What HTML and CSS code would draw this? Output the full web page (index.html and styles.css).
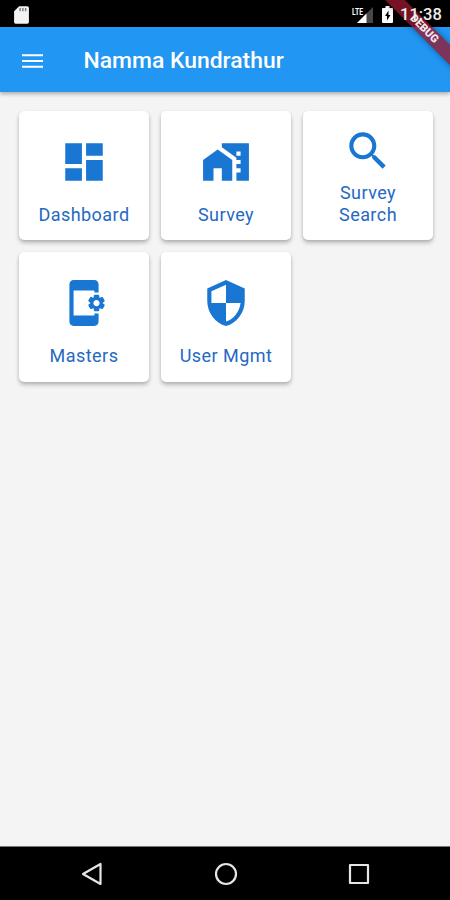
FILE: index.html
```html
<!DOCTYPE html>
<html lang="en">
<head>
<meta charset="utf-8">
<title>Namma Kundrathur</title>
<link rel="stylesheet" href="styles.css">
</head>
<body>
<div class="screen">
  <div class="status">
    <svg class="sd" viewBox="0 0 14 17"><path fill="#f4f4f4" d="M4.800 .3H12.500a1.500 1.500 0 0 1 1.500 1.500v13.400a1.500 1.500 0 0 1-1.500 1.500H1.500a1.500 1.500 0 0 1-1.500-1.500V5z"/><path stroke="#777" stroke-width="1.300" d="M5.700 2v3M8.300 2v3M10.900 2v3"/></svg>
    <div class="indicators">
      <svg class="signal" viewBox="0 0 22 18"><path fill="#484848" d="M21 1v16H5z"/><path fill="#fff" d="M14.500 7.500V17H5z"/><text x="0" y="8.500" textLength="11" lengthAdjust="spacingAndGlyphs">LTE</text></svg>
      <svg class="battery" viewBox="0 0 11 17"><path fill="#fff" d="M3.500 0h4v2H10a1 1 0 0 1 1 1v13a1 1 0 0 1-1 1H1a1 1 0 0 1-1-1V3a1 1 0 0 1 1-1h2.500z"/><path d="M6.500 4.500 3 10H5v4.500L8.500 9H6.500z"/></svg>
      <span class="time">11:38</span>
    </div>
  </div>
  <header class="appbar">
    <svg class="menu" viewBox="0 0 22 16"><path stroke="#fff" stroke-width="2.300" d="M0 2h22M0 8h22M0 14h22"/></svg>
    <h1>Namma Kundrathur</h1>
  </header>
  <main class="grid">
    <div class="card"><div class="icon"><svg viewBox="0 0 24 24"><path d="M3 13h8V3H3v10zm0 8h8v-6H3v6zm10 0h8V11h-8v10zm0-18v6h8V3h-8z"/></svg></div><span>Dashboard</span></div>
    <div class="card"><div class="icon"><svg viewBox="0 0 24 24"><path d="M1 11v10h5v-6h4v6h5V11L8 6zM10 3v1.970l7 5V11h2v2h-2v2h2v2h-2v4h6V3H10zm9 6h-2V7h2v2z"/></svg></div><span>Survey</span></div>
    <div class="card"><div class="icon"><svg viewBox="0 0 24 24"><path d="M15.500 14h-.79l-.28-.27C15.410 12.590 16 11.110 16 9.500 16 5.910 13.090 3 9.500 3S3 5.910 3 9.500 5.910 16 9.500 16c1.610 0 3.090-.59 4.230-1.570l.27.28v.79l5 4.990L20.490 19l-4.990-5zm-6 0C7.010 14 5 11.990 5 9.500S7.010 5 9.500 5 14 7.010 14 9.500 11.990 14 9.500 14z"/></svg></div><span>Survey<br>Search</span></div>
    <div class="card"><div class="icon"><svg viewBox="0 0 24 24"><path d="M21.810 12.740l-.82-.63v-.22l.8-.63c.16-.12.2-.34.1-.51l-.85-1.480c-.07-.13-.21-.2-.35-.2-.05 0-.1.010-.15.030l-.95.380c-.08-.05-.11-.07-.19-.11l-.15-1.010c-.03-.21-.2-.36-.4-.36h-1.710c-.2 0-.37.150-.4.340l-.14 1.010c-.03.020-.07.030-.1.050l-.09.060-.95-.38c-.05-.02-.1-.03-.15-.03-.14 0-.27.070-.35.200l-.85 1.480c-.1.170-.06.390.1.510l.8.630v.230l-.8.630c-.16.120-.2.340-.1.510l.85 1.480c.07.130.210.200.350.200.050 0 .1-.01.150-.03l.95-.37c.08.050.120.070.200.110l.15 1.010c.03.200.200.340.400.340h1.710c.2 0 .37-.15.400-.34l.15-1.010c.03-.02.070-.03.100-.05l.09-.06.950.380c.05.020.100.030.150.030.140 0 .27-.07.350-.2l.85-1.480c.1-.17.060-.39-.1-.51zM18 13.500c-.83 0-1.500-.67-1.500-1.500s.67-1.500 1.500-1.500 1.500.67 1.500 1.500-.67 1.500-1.500 1.500zM17 18H7V6h10v1h2V3c0-1.100-.9-2-2-2H7c-1.100 0-2 .9-2 2v18c0 1.100.9 2 2 2h10c1.100 0 2-.9 2-2v-4h-2v1z"/></svg></div><span>Masters</span></div>
    <div class="card"><div class="icon"><svg viewBox="0 0 24 24"><path d="M12 1L3 5v6c0 5.550 3.840 10.740 9 12 5.160-1.260 9-6.450 9-12V5l-9-4zm0 10.990h7c-.53 4.120-3.280 7.790-7 8.940V12H5V6.300l7-3.110v8.800z"/></svg></div><span>User Mgmt</span></div>
  </main>
  <nav class="navbar">
    <svg viewBox="0 0 24 24"><path d="M20.500 2v20L3 12z"/></svg>
    <svg viewBox="0 0 24 24"><circle cx="12" cy="12" r="10"/></svg>
    <svg viewBox="0 0 24 24"><path d="M3 3h18v18H3z"/></svg>
  </nav>
  <div class="corner"><div class="ribbon">DEBUG</div></div>
</div>
</body>
</html>
```
FILE: styles.css
```css
* { box-sizing: border-box; }
body { margin: 0; font-family: Roboto, sans-serif; }
.screen {
  position: relative;
  display: flex;
  flex-direction: column;
  width: 450px;
  height: 900px;
  overflow: hidden;
  background: #f4f4f4;
}
.status {
  display: flex;
  justify-content: space-between;
  align-items: center;
  height: 27px;
  padding: 2px 9px 0 14px;
  background: #000;
}
.sd { width: 15px; height: 18px; }
.indicators { display: flex; align-items: center; }
.signal { width: 22px; height: 18px; margin-right: 8px; }
.signal text { font-size: 9px; font-weight: 700; fill: #fff; }
.battery { width: 11px; height: 17px; margin-right: 7px; }
.time {
  position: relative;
  z-index: 2;
  width: 41px;
  color: #eee;
  font-size: 16.5px;
  font-weight: 500;
  line-height: 20px;
  white-space: nowrap;
  text-align: right;
}
.appbar {
  display: flex;
  align-items: center;
  height: 65px;
  padding: 2px 0 0 22px;
  background: #2196f3;
  box-shadow: 0 2px 4px rgba(0, 0, 0, .3);
}
.menu { width: 21px; height: 16px; }
.appbar h1 {
  margin: 0 0 0 40.5px;
  color: #fff;
  font-size: 22.9px;
  font-weight: 500;
  line-height: 28px;
}
.grid {
  flex: 1;
  display: grid;
  grid-template-columns: repeat(3, 130px);
  grid-auto-rows: 129.5px;
  align-content: start;
  gap: 12px;
  padding: 18.5px 0 0 19px;
}
.card {
  display: flex;
  flex-direction: column;
  align-items: center;
  padding: 9px 0 14.5px;
  border-radius: 5px;
  background: #fff;
  box-shadow: 0 3px 4px rgba(0, 0, 0, .22), 0 1px 3px rgba(0, 0, 0, .1);
}
.icon {
  flex: 1;
  display: flex;
  align-items: center;
}
.card svg { display: block; width: 50px; height: 50px; fill: #1976d2; }
.card span {
  color: #2469c2;
  font-size: 18px;
  line-height: 22px;
  letter-spacing: .45px;
  text-align: center;
}
.navbar {
  display: flex;
  justify-content: space-between;
  align-items: center;
  height: 54px;
  padding: 0 79px 0 80px;
  border-top: 1px solid #777;
  background: #000;
}
.navbar svg {
  width: 24px;
  height: 24px;
  fill: none;
  stroke: #e6e6e6;
  stroke-width: 2.2;
  stroke-linejoin: round;
}
.corner {
  position: absolute;
  top: 0;
  right: 0;
  width: 80px;
  height: 80px;
  overflow: hidden;
}
.ribbon {
  position: absolute;
  top: 22px;
  left: 4px;
  width: 100px;
  height: 14px;
  transform: rotate(45deg);
  background: rgba(150, 24, 48, .78);
  box-shadow: 0 0 6px rgba(0, 0, 0, .4);
  color: #f4e8ec;
  font-size: 11px;
  font-weight: 900;
  line-height: 14px;
  text-align: center;
}
```
